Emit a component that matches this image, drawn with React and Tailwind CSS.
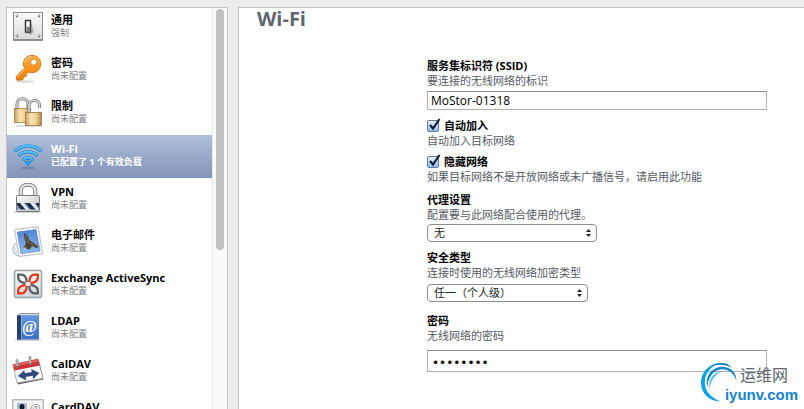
import { useState } from 'react';

function GeneralIcon() {
  return (
    <svg className="size-8 shrink-0" viewBox="0 0 32 32" aria-hidden="true">
      <defs>
        <linearGradient id="plate" x1="0" y1="0" x2="0" y2="1">
          <stop offset="0" stopColor="#fafafa" />
          <stop offset="1" stopColor="#dadada" />
        </linearGradient>
      </defs>
      <rect x="1.5" y="1.5" width="29" height="27" fill="url(#plate)" stroke="#8a8a8a" />
      <path d="M1 29.5h30" stroke="#8f8f8f" />
      {[[5, 5], [27, 5], [5, 25], [27, 25]].map(([x, y]) => (
        <g key={`${x}-${y}`}>
          <circle cx={x} cy={y} r="1.4" fill="#777" />
          <circle cx={x - 0.4} cy={y - 0.5} r="0.7" fill="#eee" />
        </g>
      ))}
      <path d="M19 11l3 10-3 3-6-2z" fill="#8d8d8d" opacity=".6" />
      <rect x="13.5" y="9.5" width="5" height="11.5" fill="#e8e8e8" stroke="#333" strokeWidth="1.4" />
      <path d="M14.5 16h4l-.5 5h-3z" fill="#777" />
      <path d="M15 11h2v4h-2z" fill="#fff" />
    </svg>
  );
}

function KeyIcon() {
  return (
    <svg className="size-8 shrink-0" viewBox="0 0 32 32" aria-hidden="true">
      <defs>
        <linearGradient id="key" x1="0" y1="0" x2="0" y2="1">
          <stop offset="0" stopColor="#fcb04c" />
          <stop offset=".5" stopColor="#f8951f" />
          <stop offset="1" stopColor="#e97d0b" />
        </linearGradient>
      </defs>
      <ellipse cx="13" cy="27.5" rx="10" ry="1.2" fill="#000" opacity=".15" />
      <path
        fillRule="evenodd"
        fill="url(#key)"
        stroke="#c8700f"
        strokeWidth=".8"
        d="M20 1.3c5.200 0 8.800 3.700 8.800 8.600 0 5-3.900 8.800-8.900 8.800-1.300 0-2.500-.2-3.500-.7l-2 2.300-.3 2.300-2.700.2-.4 3-2.900.200-2 .4-1.500-.5-.3-3.700 8.300-8.200c-.8-1.200-1.300-2.700-1.300-4.100 0-5 3.800-8.600 8.700-8.600zm1.700 3.700a3.100 3.100 0 1 0 .1 6.200a3.100 3.100 0 0 0-.1-6.200z"
      />
      <path d="M13 8c.6-3 3-5.200 6.600-5.400M5.200 22.600l7.500-7.200" fill="none" stroke="#ffd08c" strokeWidth="1" />
    </svg>
  );
}

function RestrictionsIcon() {
  return (
    <svg className="size-8 shrink-0" viewBox="0 0 32 32" aria-hidden="true">
      <defs>
        <linearGradient id="brass" x1="0" y1="0" x2="1" y2="0">
          <stop offset="0" stopColor="#c99f5b" />
          <stop offset=".35" stopColor="#f8e3b4" />
          <stop offset=".65" stopColor="#efd08f" />
          <stop offset="1" stopColor="#a97c3e" />
        </linearGradient>
      </defs>
      <path d="M4 29h26" stroke="#999" opacity=".4" strokeWidth="1.5" />
      <path d="M5 12V7c0-7 11-7 11 0v5" fill="none" stroke="#747474" strokeWidth="3" />
      <path d="M5 12V7c0-7 11-7 11 0v5" fill="none" stroke="#dedede" strokeWidth="1.4" />
      <rect x="2.5" y="11.5" width="16" height="14" fill="url(#brass)" stroke="#a27d48" strokeWidth=".8" />
      <path d="M17 15V9c0-7 10.500-7 10.500-1v3" fill="none" stroke="#747474" strokeWidth="3" />
      <path d="M17 15V9c0-7 10.500-7 10.500-1v3" fill="none" stroke="#e4e4e4" strokeWidth="1.4" />
      <rect x="13.5" y="15.5" width="16" height="13" fill="url(#brass)" stroke="#9c7440" strokeWidth=".8" />
      <path d="M14 19h15M14 23h15" stroke="#fff4d4" opacity=".4" />
    </svg>
  );
}

function WifiIcon() {
  return (
    <svg className="size-8 shrink-0" viewBox="0 0 32 32" aria-hidden="true">
      <ellipse cx="16" cy="28" rx="7" ry="1.5" fill="#2d4a7c" opacity=".3" />
      <g fill="none" stroke="#1876c6" strokeWidth="3.4">
        <path d="M2.500 11.500c7.500-7.500 19.500-7.500 27 0" />
        <path d="M6.500 15.800c5.500-5.200 13.500-5.200 19 0" />
        <path d="M10.700 20c3-3 7.600-3 10.600 0" />
      </g>
      <g fill="none" stroke="#51c0fa" strokeWidth="2.2">
        <path d="M2.900 11c7.500-7.200 18.700-7.200 26.200 0" />
        <path d="M6.900 15.300c5.300-5 12.900-5 18.200 0" />
        <path d="M11 19.600c2.900-2.700 7.100-2.700 10 0" />
      </g>
      <path d="M12.800 22.300c1.800-1.600 4.600-1.600 6.400 0L16 26z" fill="#28a5ef" stroke="#1876c6" strokeWidth=".6" />
    </svg>
  );
}

function VpnIcon() {
  return (
    <svg className="size-8 shrink-0" viewBox="0 0 32 32" aria-hidden="true">
      <defs>
        <linearGradient id="steel" x1="0" y1="0" x2="1" y2="1">
          <stop offset="0" stopColor="#fff" />
          <stop offset="1" stopColor="#b9b9b9" />
        </linearGradient>
        <clipPath id="band">
          <rect x="5" y="20" width="22" height="6.5" />
        </clipPath>
      </defs>
      <path d="M2 29h27" stroke="#777" opacity=".4" strokeWidth="1.5" />
      <path d="M8.700 13V8c0-8.500 14.600-8.500 14.600 0v5" fill="none" stroke="#777" strokeWidth="4" />
      <path d="M8.700 13V8c0-8.500 14.600-8.500 14.600 0v5" fill="none" stroke="#e3e3e3" strokeWidth="2.4" />
      <rect x="4.5" y="12.5" width="23" height="16" rx="1" fill="url(#steel)" stroke="#777" />
      <g clipPath="url(#band)">
        <rect x="5" y="20" width="22" height="7" fill="#e8edf5" />
        <path d="M3 20h5l6 7H9zM13 20h5l6 7h-5zM23 20h5v6z" fill="#202c47" />
        <path d="M5 23v4h4zM11.500 20l6 7h1.500l-6-7zM21.500 20l6 7v-2z" fill="#6e91cc" />
      </g>
    </svg>
  );
}

function MailIcon() {
  return (
    <svg className="size-8 shrink-0" viewBox="0 0 32 32" aria-hidden="true">
      <defs>
        <linearGradient id="sky" x1="0" y1="0" x2="0" y2="1">
          <stop offset="0" stopColor="#4c83d8" />
          <stop offset="1" stopColor="#8fb9f0" />
        </linearGradient>
      </defs>
      <circle cx="8" cy="23" r="7" fill="none" stroke="#b4bac1" strokeWidth="1.2" />
      <circle cx="8" cy="23" r="4.5" fill="none" stroke="#c9ced4" />
      <path d="M2.500 3.500L26 .8 30.800 27.500 7 30.500z" fill="#fafafa" stroke="#a8acb2" />
      <path d="M2.500 3.500L26 .8 30.800 27.500 7 30.500z" fill="none" stroke="#f4f4f4" strokeDasharray=".8 1.6" />
      <path d="M5.200 6L24 3.600 28.200 25 9 27.700z" fill="url(#sky)" stroke="#4871b3" strokeWidth=".5" />
      <path
        d="M12 7c2.500 1 4.500 4 5.700 7.500l2.600 1.500 6 4.200-1.300 2.300-5-2.500-2.300 3.500-4-1-2.600-.5 2-2.800.8-3C12.500 13.500 11.600 10 12 7z"
        fill="#51452f"
      />
      <path d="M13 9l3.500 8M18 17l6 4" stroke="#8f805f" strokeWidth=".8" />
      <path d="M11 22l3.500-.8-1 2z" fill="#d7d4c2" />
    </svg>
  );
}

function ExchangeIcon() {
  return (
    <svg className="size-8 shrink-0" viewBox="0 0 32 32" aria-hidden="true">
      <defs>
        <linearGradient id="tile" x1="0" y1="0" x2="0" y2="1">
          <stop offset="0" stopColor="#fdfdfd" />
          <stop offset="1" stopColor="#d0d6da" />
        </linearGradient>
      </defs>
      <rect x="2.5" y="1.5" width="27" height="27" rx="1.500" fill="url(#tile)" stroke="#98a3aa" strokeWidth="1.5" />
      <g fill="none" strokeWidth="2.300">
        <path d="M14.800 13.200C14.500 9 13 5.700 9.500 5.700H6.200V8.500c0 3.500 3 5 7.300 5.700" stroke="#5d6164" />
        <path d="M17.200 16.800c.3 4.200 1.800 7.500 5.300 7.500h3.300v-2.800c0-3.500-3-5-7.300-5.700" stroke="#5d6164" />
        <path d="M17.200 13.200c.3-4.200 1.800-7.500 5.300-7.500h3.300v2.800c0 3.500-3 5-7.300 5.700" stroke="#e8371c" />
        <path d="M14.800 16.800c-.3 4.200-1.800 7.500-5.300 7.500H6.200v-2.800c0-3.500 3-5 7.300-5.700" stroke="#e8371c" />
      </g>
    </svg>
  );
}

function LdapIcon() {
  return (
    <svg className="size-8 shrink-0" viewBox="0 0 32 32" aria-hidden="true">
      <defs>
        <linearGradient id="cover" x1="0" y1="0" x2="0" y2="1">
          <stop offset="0" stopColor="#6497e0" />
          <stop offset="1" stopColor="#3b6ec3" />
        </linearGradient>
      </defs>
      <path d="M3 28.300h26" stroke="#888" opacity=".4" strokeWidth="1.4" />
      <path d="M5 4l3-2.500h18.500V4z" fill="#d6d6d6" stroke="#777" strokeWidth=".7" />
      <rect x="5" y="3.5" width="22" height="24" fill="url(#cover)" />
      <rect x="5" y="3.5" width="4" height="24" fill="#243f70" />
      <path d="M9.500 4v23" stroke="#8fb3ea" strokeWidth=".8" />
      <text x="17.500" y="20" textAnchor="middle" fill="#fff" fontSize="16" fontWeight="bold" fontFamily="Liberation Serif, serif">@</text>
    </svg>
  );
}

function CalDavIcon() {
  return (
    <svg className="size-8 shrink-0" viewBox="0 0 32 32" aria-hidden="true">
      <path d="M2 10l25-4 4.500 18.500L6 29.500z" fill="#666" />
      <path d="M1 9.500L26 4l5 19.500L5 28z" fill="#f8f8f8" stroke="#888" strokeWidth=".7" />
      <path d="M1 9.500L26 4l1.800 6.500L2.500 15.500z" fill="#cf3038" />
      <path d="M1 9.500L26 4l.8 2.500L1.700 12z" fill="#e05a5c" />
      <path d="M5.500 11.500L5 5.500M18.500 9l-.7-6.500" stroke="#777" strokeWidth="2.6" strokeLinecap="round" />
      <path d="M5.300 10.500L5 5.500M18.300 8l-.5-5" stroke="#ddd" strokeWidth="1.1" strokeLinecap="round" />
      <path d="M5.800 21l6.500-5.700.5 3 7-1.200-.6-3.200 8 4.100-6 6-.6-3.200-7 1.200.6 3.400z" fill="#31477f" />
    </svg>
  );
}

function CardDavIcon() {
  return (
    <svg className="size-8 shrink-0" viewBox="0 0 32 32" aria-hidden="true">
      <rect x=".8" y="1.800" width="30.400" height="22" fill="#f4f4f4" stroke="#9b9b9b" />
      <rect x="5" y="5" width="10" height="14" fill="#a9bdd8" />
      <path d="M10 6c-1.800 0-2.600 1.200-2.500 3 .1 1.500.7 2.500 1.300 3v2L5.500 16v3h9v-3l-3.300-2v-2c.6-.5 1.200-1.500 1.300-3 .1-1.800-.7-3-2.500-3z" fill="#171c26" />
      <text x="23" y="14" textAnchor="middle" fill="#8b8b8b" fontSize="12" fontFamily="Liberation Serif, serif">@</text>
    </svg>
  );
}

const PAYLOADS = [
  { name: '通用', status: '强制', Icon: GeneralIcon },
  { name: '密码', status: '尚未配置', Icon: KeyIcon },
  { name: '限制', status: '尚未配置', Icon: RestrictionsIcon },
  { name: 'Wi-Fi', status: '已配置了 1 个有效负载', Icon: WifiIcon },
  { name: 'VPN', status: '尚未配置', Icon: VpnIcon },
  { name: '电子邮件', status: '尚未配置', Icon: MailIcon },
  { name: 'Exchange ActiveSync', status: '尚未配置', Icon: ExchangeIcon },
  { name: 'LDAP', status: '尚未配置', Icon: LdapIcon },
  { name: 'CalDAV', status: '尚未配置', Icon: CalDavIcon },
  { name: 'CardDAV', status: '尚未配置', Icon: CardDavIcon },
];

function PayloadList({ selected, onSelect }) {
  return (
    <nav className="flex w-[222px] shrink-0 overflow-hidden border border-b-0 border-[#c4c4c4] bg-white">
      <ul className="-mt-0.5 min-w-0 flex-1">
        {PAYLOADS.map(({ name, status, Icon }) => {
          const active = selected === name;
          return (
            <li key={name}>
              <button
                type="button"
                onClick={() => onSelect(name)}
                className={`flex h-[43px] w-full items-start gap-[7px] pt-[5px] pl-[5px] text-left ${
                  active ? 'bg-linear-to-b from-[#b1c0da] to-[#8195b9] text-white' : 'text-black'
                }`}
              >
                <Icon />
                <span className="flex flex-col pt-0.5">
                  <span className="text-[11px] leading-[14px] font-bold">{name}</span>
                  <span className={`text-[9px] leading-[11px] ${active ? 'font-bold' : 'text-[#808080]'}`}>{status}</span>
                </span>
              </button>
            </li>
          );
        })}
      </ul>
      <div className="w-[15px] shrink-0 border-l border-[#e8e8e8] bg-[#fafafa] px-[3px] pt-px">
        <div className="h-[241px] w-2 rounded-full bg-[#c1c1c1]" />
      </div>
    </nav>
  );
}

function FieldText({ id, label, hint }) {
  return (
    <>
      <label htmlFor={id} className="block leading-[15px] font-bold text-black">{label}</label>
      <p className="leading-[15px] text-[#555b63]">{hint}</p>
    </>
  );
}

function CheckField({ id, label, hint }) {
  return (
    <div>
      <div className="flex h-[15px] items-center gap-[5px]">
        <span className="relative size-3">
          <input
            id={id}
            type="checkbox"
            defaultChecked
            className="peer block size-3 appearance-none rounded-[2px] border border-[#5f7ba6] bg-linear-to-b from-[#e8f2fd] to-[#8fbdf0]"
          />
          <svg className="pointer-events-none absolute -top-0.5 left-0 hidden size-3.5 peer-checked:block" viewBox="0 0 14 14" aria-hidden="true">
            <path d="M3 7l3 3.500L12.500 1" fill="none" stroke="#101c33" strokeWidth="2.2" />
          </svg>
        </span>
        <label htmlFor={id} className="leading-[15px] font-bold text-black">{label}</label>
      </div>
      <p className="leading-[15px] text-[#555b63]">{hint}</p>
    </div>
  );
}

function SelectBox({ id, options, className }) {
  return (
    <div className={`relative ${className}`}>
      <select id={id} className="block h-[18px] w-full appearance-none rounded-[4px] border border-[#8c8c8c] bg-white pl-1.5 leading-4 text-[#222]">
        {options.map(option => (
          <option key={option}>{option}</option>
        ))}
      </select>
      <svg className="pointer-events-none absolute top-[5px] right-1.5 h-2 w-[5px]" viewBox="0 0 5 8" aria-hidden="true">
        <path d="M2.500 0L5 3H0zM2.500 8L0 5h5z" fill="#222" />
      </svg>
    </div>
  );
}

function SiteMark() {
  return (
    <div className="pointer-events-none absolute right-1.5 bottom-1.5 h-[41px] w-[97px]">
      <svg className="absolute top-0 left-0 h-[41px] w-[38px]" viewBox="0 0 38 41" aria-hidden="true">
        <path d="M20 1C9 1 0 9.500 0 21c0 10 8 18.500 19.500 18.500C10.500 36 3.800 29.500 3.800 20.500 3.800 11 10.500 3 20 1z" fill="#0ba2e6" />
        <path d="M10 4C19-1 27 .5 31 6 25 2.300 18 2 10 4z" fill="#0878c4" />
        <path d="M6.500 25C3 12 14 3.500 24 5c7 1.200 11.500 7 11.500 14C33 11 27 6.800 20.500 7.300 12.500 8 7 15 6.500 25z" fill="#0a86d2" />
        <path d="M8.500 27c-1.500-9.500 4-17 13-17.500C14.500 11.500 9.500 18 8.500 27z" fill="#38bdf0" />
      </svg>
      <div className="relative flex flex-col items-end">
        <span className="pr-2.5 text-[16px] leading-[26px] text-[#5c6670]">运维网</span>
        <span className="font-['Liberation_Sans',sans-serif] text-[15px] leading-[14px] font-bold text-[#1583d2]">iyunv.com</span>
      </div>
    </div>
  );
}

export default function App() {
  const [selected, setSelected] = useState('Wi-Fi');

  return (
    <div className="relative flex h-screen gap-2.5 overflow-hidden bg-[#ececec] pt-[7px] pl-1.5 font-['Open_Sans','Noto_Sans_CJK_SC',sans-serif] text-[11px]">
      <PayloadList selected={selected} onSelect={setSelected} />

      <main className="min-w-0 flex-1 overflow-hidden border-t border-l border-[#c4c4c4] bg-white">
        <h1 className="h-[50px] pl-[18px] text-[20px] leading-[22px] font-bold text-[#5f6670]">Wi-Fi</h1>

        <form className="flex flex-col gap-2 pr-9 pl-[188px]" onSubmit={e => e.preventDefault()}>
          <div>
            <FieldText id="ssid" label="服务集标识符 (SSID)" hint="要连接的无线网络的标识" />
            <input
              id="ssid"
              type="text"
              defaultValue="MoStor-01318"
              className="mt-[3px] block h-[19px] w-full max-w-[340px] border border-[#b0b0b0] border-t-[#8f8f8f] bg-white px-[3px] text-[12px] text-black"
            />
          </div>

          <div className="flex flex-col gap-1.5">
            <CheckField id="auto-join" label="自动加入" hint="自动加入目标网络" />
            <CheckField id="hidden-network" label="隐藏网络" hint="如果目标网络不是开放网络或未广播信号，请启用此功能" />
          </div>

          <div>
            <FieldText id="proxy" label="代理设置" hint="配置要与此网络配合使用的代理。" />
            <SelectBox id="proxy" options={['无', '手动', '自动']} className="mt-0.5 w-[170px]" />
          </div>

          <div>
            <FieldText id="security" label="安全类型" hint="连接时使用的无线网络加密类型" />
            <SelectBox id="security" options={['任一（个人级）', '无', 'WEP', 'WPA / WPA2']} className="mt-1 w-[161px]" />
          </div>

          <div className="pt-[3px]">
            <FieldText id="password" label="密码" hint="无线网络的密码" />
            <input
              id="password"
              type="password"
              defaultValue="mostor18"
              className="mt-[7px] block h-[22px] w-full max-w-[340px] border border-[#b0b0b0] border-t-[#8f8f8f] bg-white px-1 pt-1 font-['DejaVu_Sans',sans-serif] text-[12px] text-black"
            />
          </div>
        </form>
      </main>

      <SiteMark />
    </div>
  );
}
